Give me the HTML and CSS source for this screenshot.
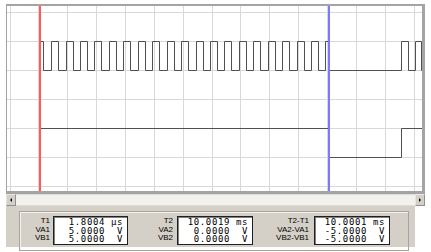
FILE: index.html
```html
<!DOCTYPE html>
<html>
<head>
<meta charset="utf-8">
<link rel="stylesheet" href="styles.css">
</head>
<body>
<div class="scope">
  <div class="screen">
    <svg width="415" height="185" viewBox="0 0 415 185">
      <g class="grid">
        <path d="M3.5 0V185M31.5 0V185M60.5 0V185M89.5 0V185M118.5 0V185M147.5 0V185M176.5 0V185M205.5 0V185M233.5 0V185M262.5 0V185M291.5 0V185M320.5 0V185M349.5 0V185M378.5 0V185M407.5 0V185"/>
        <path d="M0 6.5H415M0 35.5H415M0 64.5H415M0 93.5H415M0 122.5H415M0 151.5H415M0 180.5H415"/>
      </g>
      <path class="trace" d="M33 35.5H36.5V64.5H44.5V35.5H51.5V64.5H59.5V35.5H66.5V64.5H73.5V35.5H80.5V64.5H87.5V35.5H94.5V64.5H102.5V35.5H109.5V64.5H116.5V35.5H123.5V64.5H131.5V35.5H138.5V64.5H145.5V35.5H152.5V64.5H160.5V35.5H167.5V64.5H174.5V35.5H181.5V64.5H189.5V35.5H196.5V64.5H203.5V35.5H210.5V64.5H217.5V35.5H224.5V64.5H232.5V35.5H239.5V64.5H246.5V35.5H253.5V64.5H261.5V35.5H268.5V64.5H275.5V35.5H282.5V64.5H290.5V35.5H297.5V64.5H304.5V35.5H311.5V64.5H318.5V35.5H321.5V64.5H394.5V35.5H401.5V64.5H408.5V35.5H414.5V64.5H415"/>
      <path class="trace" d="M33 122.5H321.5V151.5H394.5V122.5H415"/>
      <path class="cursor1" d="M33 0V185"/>
      <path class="cursor2" d="M322 0V185"/>
    </svg>
  </div>
  <div class="scrollbar">
    <div class="sb-btn"><span class="tri-left"></span></div>
    <div class="sb-track"></div>
    <div class="sb-btn"><span class="tri-right"></span></div>
  </div>
  <div class="panel">
    <div class="frame">
      <div class="group g1">
        <div class="labels"><span>T1</span><span>VA1</span><span>VB1</span></div>
        <div class="box"><div> 1.8004 μs</div><div> 5.0000  V</div><div> 5.0000  V</div></div>
      </div>
      <div class="group g2">
        <div class="labels"><span>T2</span><span>VA2</span><span>VB2</span></div>
        <div class="box"><div>10.0019 ms</div><div> 0.0000  V</div><div> 0.0000  V</div></div>
      </div>
      <div class="group g3">
        <div class="labels"><span>T2-T1</span><span>VA2-VA1</span><span>VB2-VB1</span></div>
        <div class="box"><div>10.0001 ms</div><div>-5.0000  V</div><div>-5.0000  V</div></div>
      </div>
    </div>
  </div>
</div>
</body>
</html>
```
FILE: styles.css
```css
html, body {
  margin: 0;
  padding: 0;
  background: #ffffff;
}
body {
  width: 431px;
  height: 252px;
  overflow: hidden;
  font-family: "Liberation Sans", Arial, sans-serif;
}
.scope {
  margin: 4px 0 0 6px;
  width: 419px;
}
.screen {
  width: 415px;
  height: 185px;
  border-style: solid;
  border-color: #a4a4a4;
  border-width: 2px 3px 3px 1px;
  background: #ffffff;
}
.screen svg {
  display: block;
}
.grid path {
  stroke: #d8d8d8;
  stroke-width: 1;
  fill: none;
}
.trace {
  stroke: #505050;
  stroke-width: 1;
  fill: none;
}
.cursor1 {
  stroke: #ff5a5a;
  stroke-width: 2;
}
.cursor2 {
  stroke: #7a7aff;
  stroke-width: 2;
}
.scrollbar {
  display: flex;
  height: 12px;
  width: 419px;
}
.sb-btn {
  width: 10px;
  height: 12px;
  box-sizing: border-box;
  background: #d4d0c8;
  border: 1px solid #e8e6e2;
  border-right-color: #909090;
  border-bottom-color: #909090;
  display: flex;
  align-items: center;
  justify-content: center;
}
.tri-left {
  width: 0;
  height: 0;
  border-top: 2px solid transparent;
  border-bottom: 2px solid transparent;
  border-right: 2px solid #000;
}
.tri-right {
  width: 0;
  height: 0;
  border-top: 2px solid transparent;
  border-bottom: 2px solid transparent;
  border-left: 2px solid #000;
}
.sb-track {
  flex: 1;
  height: 12px;
  box-sizing: border-box;
  border-top: 1px solid #e0ddd8;
  border-bottom: 1px solid #e0ddd8;
  background-color: #f2f1ee;
  background-image: radial-gradient(#e2e0dc 0.6px, transparent 0.7px);
  background-size: 2px 2px;
}
.panel {
  width: 409px;
  height: 41px;
  box-sizing: border-box;
  background: #d4d0c8;
  padding: 5px 0 0 13px;
}
.frame {
  width: 390px;
  height: 40px;
  box-sizing: border-box;
  border: 1px solid #a8a49c;
  box-shadow: inset 1px 1px 0 #f4f2ee;
  display: flex;
  padding-top: 4px;
}
.group {
  display: flex;
}
.labels {
  display: flex;
  flex-direction: column;
  align-items: flex-end;
  font-size: 8px;
  line-height: 8.5px;
  padding-top: 1px;
  color: #000;
}
.g1 .labels { width: 30px; margin-right: 3px; }
.g2 .labels { width: 45px; margin-right: 4px; }
.g3 .labels { width: 56px; margin-right: 5px; }
.box {
  width: 76px;
  height: 29px;
  box-sizing: border-box;
  background: #ffffff;
  border: 1px solid #202020;
  box-shadow: inset 1px 1px 0 #808080;
  padding: 1px 4px 0 0;
  text-align: right;
  white-space: pre;
  font-family: "DejaVu Sans Mono", "Liberation Mono", monospace;
  font-size: 9px;
  letter-spacing: 0.6px;
  line-height: 8.5px;
  color: #000;
}
.g1 .box { width: 75px; }
```
